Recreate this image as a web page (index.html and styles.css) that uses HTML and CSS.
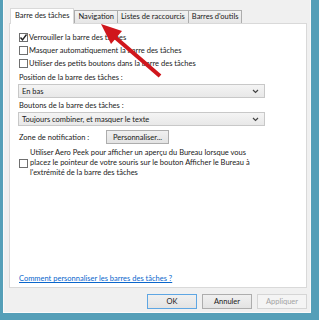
FILE: index.html
```html
<!DOCTYPE html>
<html lang="fr">
<head>
    <meta charset="UTF-8">
    <title>Propriétés de la Barre des tâches</title>
    <link rel="stylesheet" href="styles.css">
</head>
<body>
    <div class="dialog">
        <div class="tabs">
            <div class="tab active">Barre des tâches</div>
            <div class="tab">Navigation</div>
            <div class="tab">Listes de raccourcis</div>
            <div class="tab">Barres d'outils</div>
        </div>
        <div class="panel">
            <label class="check">
                <span class="box"><svg width="9" height="9" viewBox="0 0 9 9"><path d="M1.5 4.5 L3.5 6.8 L7.5 1.5" fill="none" stroke="#222" stroke-width="1.4"/></svg></span>
                Verrouiller la barre des tâches
            </label>
            <label class="check"><span class="box"></span>Masquer automatiquement la barre des tâches</label>
            <label class="check"><span class="box"></span>Utiliser des petits boutons dans la barre des tâches</label>

            <div class="field-label">Position de la barre des tâches :</div>
            <div class="select">
                <span>En bas</span>
                <svg width="7" height="5" viewBox="0 0 7 5"><path d="M1 1 L3.5 3.5 L6 1" fill="none" stroke="#444" stroke-width="1.2"/></svg>
            </div>

            <div class="field-label">Boutons de la barre des tâches :</div>
            <div class="select">
                <span>Toujours combiner, et masquer le texte</span>
                <svg width="7" height="5" viewBox="0 0 7 5"><path d="M1 1 L3.5 3.5 L6 1" fill="none" stroke="#444" stroke-width="1.2"/></svg>
            </div>

            <div class="notif">
                <span>Zone de notification :</span>
                <button class="btn small">Personnaliser...</button>
            </div>

            <div class="peek">
                <span class="box"></span>
                <p>Utiliser Aero Peek pour afficher un aperçu du Bureau lorsque vous<br>placez le pointeur de votre souris sur le bouton Afficher le Bureau à<br>l'extrémité de la barre des tâches</p>
            </div>

            <a class="help" href="#">Comment personnaliser les barres des tâches ?</a>
        </div>
        <div class="actions">
            <button class="btn default">OK</button>
            <button class="btn">Annuler</button>
            <button class="btn" disabled>Appliquer</button>
        </div>
    </div>

    <!-- red annotation arrow -->
    <svg class="arrow" width="319" height="320" viewBox="0 0 319 320">
        <line x1="160" y1="76" x2="113" y2="35.5" stroke="#d0161c" stroke-width="4"/>
        <polygon points="101,24 122,31 111,44" fill="#d0161c"/>
    </svg>
</body>
</html>
```

FILE: styles.css
```css
:root {
    --teal: #559fb8;
    --face: #f0f0f0;
    --line: #adadad;
    --text: #1a1a1a;
}

body {
    margin: 0;
    width: 319px;
    height: 320px;
    background-color: var(--teal);
    font-family: Lato, "Open Sans", sans-serif;
    font-size: 7.5px;
    color: var(--text);
    overflow: hidden;
}

.dialog {
    box-sizing: border-box;
    width: 308px;
    height: 313px;
    margin-left: 3px;
    padding: 8px 3px 0 5px;
    background-color: var(--face);
    border: 1px solid #fafafa;
    border-top: none;
    display: flex;
    flex-direction: column;
}

/* tabs */
.tabs {
    display: flex;
    align-items: flex-end;
    height: 15px;
    padding-left: 1px;
}

.tab {
    box-sizing: border-box;
    height: 13px;
    padding: 0 3px;
    line-height: 11px;
    border: 1px solid var(--line);
    border-bottom: none;
    margin-left: -1px;
    background: linear-gradient(#f2f2f2, #e6e6e6);
    white-space: nowrap;
}

.tab.active {
    position: relative;
    z-index: 1;
    height: 16px;
    margin-bottom: -1px;
    margin-left: 0;
    margin-right: 1px;
    padding: 0 4px;
    line-height: 14px;
    background: #fff;
    border-color: #d9d9d9;
}

/* panel */
.panel {
    box-sizing: border-box;
    height: 265px;
    width: 298px;
    background-color: #fff;
    border: 1px solid #d9d9d9;
    padding: 7px 9px 2px 9px;
    display: flex;
    flex-direction: column;
}

.check {
    display: flex;
    align-items: center;
    height: 13px;
    white-space: nowrap;
}

.box {
    box-sizing: border-box;
    width: 9px;
    height: 9px;
    flex: none;
    border: 1px solid #6f6f6f;
    background: #fff;
    margin-right: 1px;
    display: flex;
    align-items: center;
    justify-content: center;
}

.box svg {
    flex: none;
}

.field-label {
    height: 13px;
    line-height: 13px;
    margin-top: 1px;
}

.select {
    box-sizing: border-box;
    width: 247px;
    height: 14px;
    margin-left: -1px;
    padding: 0 5px 0 3px;
    border: 1px solid #c8c8c8;
    background: linear-gradient(#f4f4f4, #e8e8e8);
    display: flex;
    align-items: center;
    justify-content: space-between;
}

.notif {
    display: flex;
    align-items: center;
    height: 14px;
    margin-top: 4px;
}

.notif span {
    width: 87px;
}

.btn {
    box-sizing: border-box;
    font-family: inherit;
    font-size: 7.5px;
    color: var(--text);
    padding: 0;
    border: 1px solid var(--line);
    background: linear-gradient(#f0f0f0, #e3e3e3);
    height: 15px;
    width: 50px;
}

.btn.small {
    width: 63px;
    height: 14px;
}

.btn.default {
    border-color: #5ea6e3;
}

.btn:disabled {
    color: #a3a3a3;
    border-color: #d5d5d5;
    background: #f4f4f4;
}

.peek {
    display: flex;
    align-items: center;
    margin-top: 4px;
}

.peek p {
    margin: 0 0 0 1px;
    line-height: 10px;
}

.help {
    margin-top: auto;
    line-height: 12px;
    color: #0a66cc;
}

.actions {
    display: flex;
    justify-content: flex-end;
    gap: 5px;
    margin-top: 6px;
}

.arrow {
    position: absolute;
    left: 0;
    top: 0;
    pointer-events: none;
}
```
